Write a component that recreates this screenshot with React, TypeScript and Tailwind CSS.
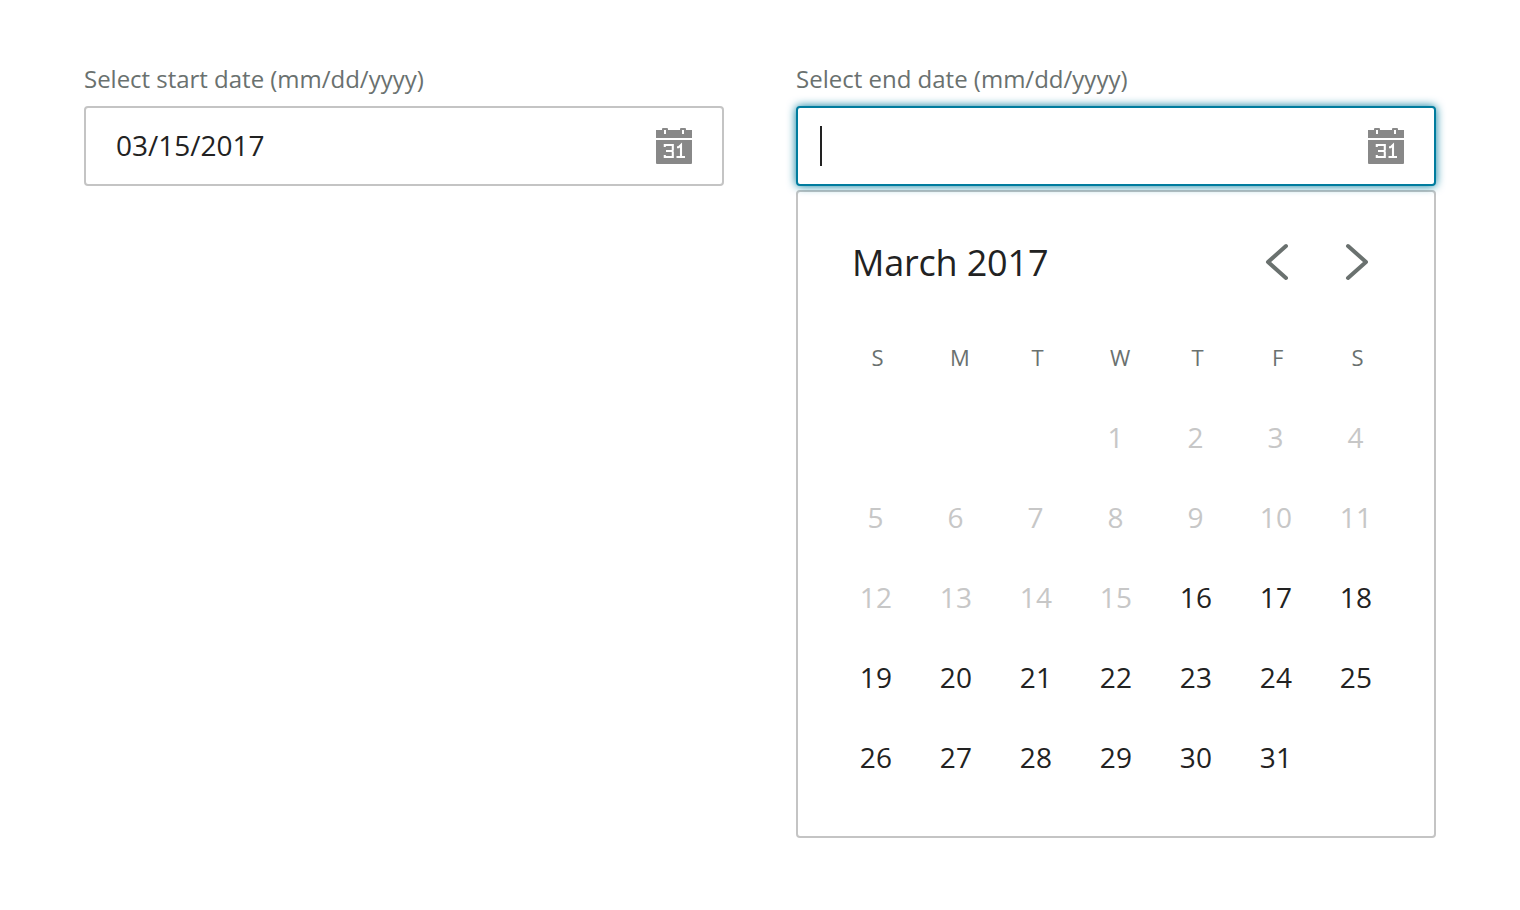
function CalendarIcon() {
  return (
    <svg width="36" height="36" viewBox="0 0 36 36" fill="#888888" aria-hidden="true">
      <path d="M0 2H6V1Q6 0 7 0H11Q12 0 12 1V2H24V1Q24 0 25 0H29Q30 0 30 1V2H36V10H0Z" />
      <rect x="8" y="2" width="2" height="4" fill="#fff" />
      <rect x="26" y="2" width="2" height="4" fill="#fff" />
      <path d="M0 12H36V35Q36 36 35 36H1Q0 36 0 35Z" />
      <path
        d="M8.8 19V17H16.8V22L16 23L16.8 24V29H8.8V27M10 23H16M21 19.2H22.6L25 17V29M20.5 29H29"
        fill="none"
        stroke="#fff"
        strokeWidth="2.1"
      />
    </svg>
  );
}

function Chevron({ d }: { d: string }) {
  return (
    <svg width="24" height="38" viewBox="0 0 24 38" fill="none" aria-hidden="true">
      <path d={d} stroke="#6a716f" strokeWidth="4" strokeLinecap="round" strokeLinejoin="round" />
    </svg>
  );
}

const weekdays = [
  { label: "S", pad: "pl-[35.5px]" },
  { label: "M", pad: "pl-[34px]" },
  { label: "T", pad: "pl-[35.5px]" },
  { label: "W", pad: "pl-[34px]" },
  { label: "T", pad: "pl-[35.5px]" },
  { label: "F", pad: "pl-[36px]" },
  { label: "S", pad: "pl-[35.5px]" },
];

const leadingBlanks = 3;
const firstAvailable = 16;
const days = Array.from({ length: 31 }, (_, i) => i + 1);

export default function App() {
  return (
    <main className="flex h-[910px] w-[1520px] items-start gap-[72px] bg-white px-[84px] pt-[62px] font-['Open_Sans',sans-serif] text-[#222222]">
      <section className="w-[640px]">
        <label className="block h-[44px] text-[24px] leading-[34px] tracking-[-0.02px] text-[#6a716f]">
          Select start date (mm/dd/yyyy)
        </label>
        <div className="flex h-[80px] items-center justify-between rounded border-2 border-[#c4c4c4] px-[30px]">
          <span className="pb-[2px] text-[28px] leading-[40px]">03/15/2017</span>
          <CalendarIcon />
        </div>
      </section>

      <section className="w-[640px]">
        <label className="block h-[44px] text-[24px] leading-[34px] text-[#6a716f]">
          Select end date (mm/dd/yyyy)
        </label>
        <div className="relative z-10 flex h-[80px] items-center justify-between rounded border-2 border-[#007c9e] bg-white pr-[30px] pl-[22px] shadow-[0_0_10px_#007c9e]">
          <span className="h-[40px] w-[2px] bg-[#222222]" />
          <CalendarIcon />
        </div>

        <div className="mt-1 h-[648px] rounded border-2 border-[#c4c4c4] px-[38px]">
          <header className="flex h-[126px] items-start justify-between pt-[46px] pr-7 pl-4">
            <h2 className="text-[36px] leading-[50px] tracking-[-0.18px]">March 2017</h2>
            <div className="flex gap-14 pt-[5px]">
              <Chevron d="M22 3L4 19L22 35" />
              <Chevron d="M4 3L22 19L4 35" />
            </div>
          </header>
          <div className="grid grid-cols-[repeat(7,80px)]">
            {weekdays.map((day, i) => (
              <span
                key={i}
                className={`${day.pad} flex h-[80px] items-center pb-[2px] text-[22px] text-[#6a716f]`}
              >
                {day.label}
              </span>
            ))}
            {Array.from({ length: leadingBlanks }, (_, i) => (
              <span key={`blank-${i}`} />
            ))}
            {days.map((n) => (
              <span
                key={n}
                className={`flex h-[80px] items-center justify-center pb-[2px] text-[28px] ${
                  n < 10 ? "pr-px" : "pl-[0.25px] tracking-[0.4px]"
                } ${n < firstAvailable ? "text-[#c7c7c7]" : "text-[#222222]"}`}
              >
                {n}
              </span>
            ))}
          </div>
        </div>
      </section>
    </main>
  );
}
